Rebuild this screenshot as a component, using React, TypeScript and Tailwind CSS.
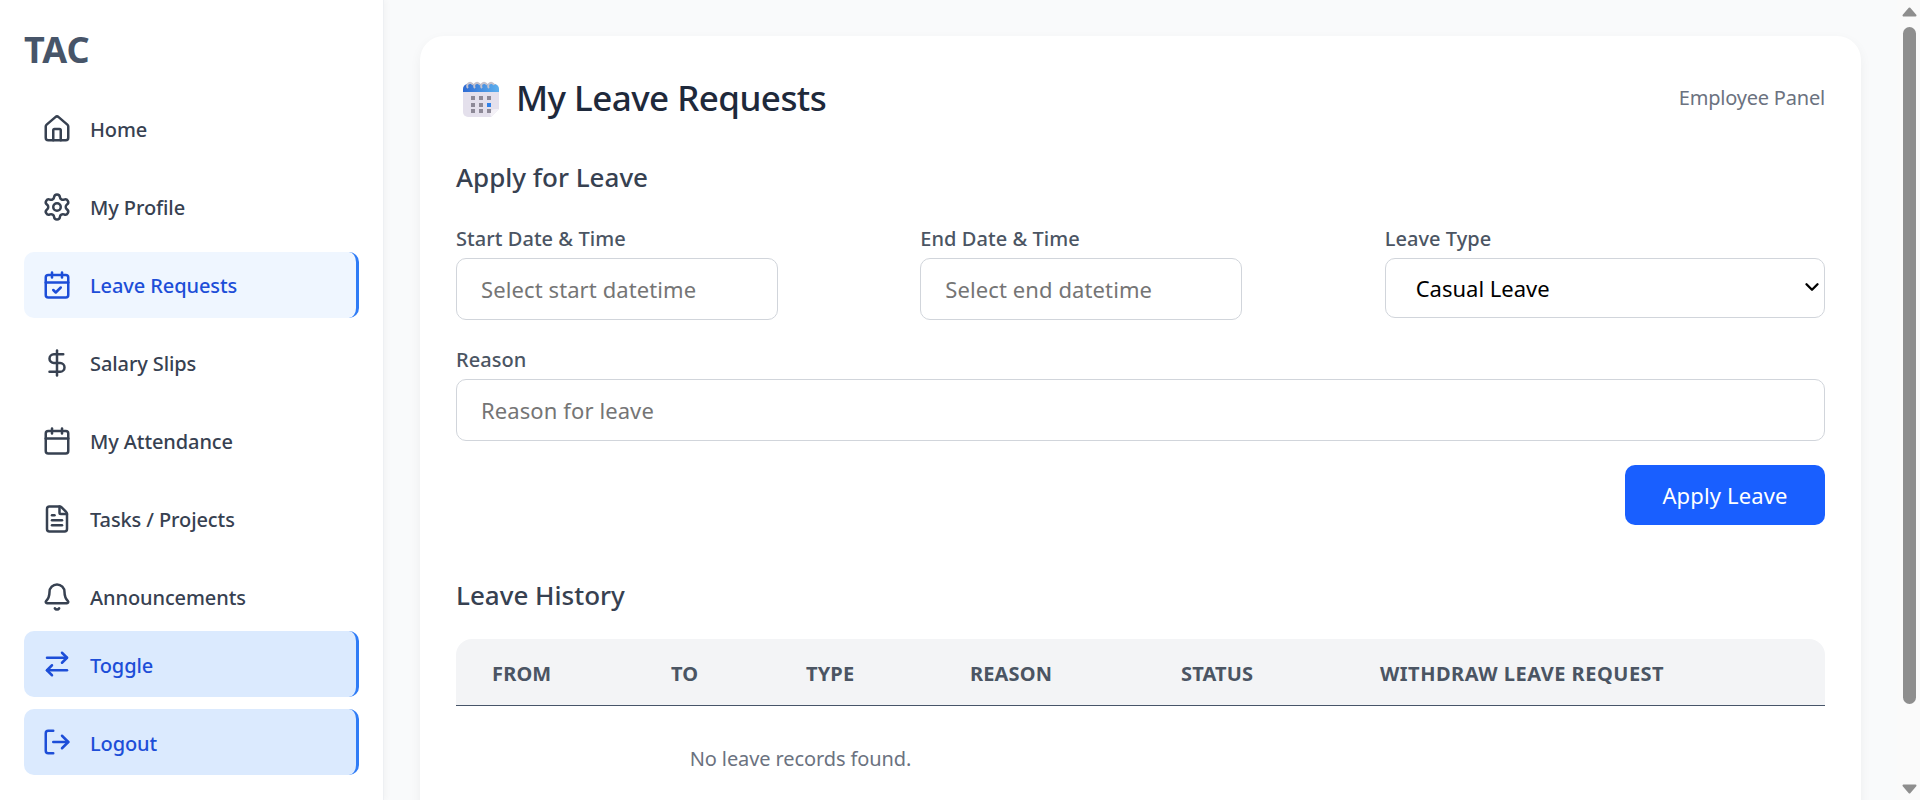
import React from 'react';
import { House, Settings, CalendarCheck, DollarSign, Calendar, FileText, Bell, ArrowRightLeft, LogOut, ChevronDown } from 'lucide-react';

const navItems = [
  { label: 'Home', icon: House },
  { label: 'My Profile', icon: Settings },
  { label: 'Leave Requests', icon: CalendarCheck, active: true },
  { label: 'Salary Slips', icon: DollarSign },
  { label: 'My Attendance', icon: Calendar },
  { label: 'Tasks / Projects', icon: FileText },
  { label: 'Announcements', icon: Bell },
];

function CalendarEmoji() {
  return (
    <svg width="36" height="38" viewBox="0 0 36 38" className="shrink-0">
      <defs>
        <linearGradient id="calTop" x1="0" y1="0" x2="1" y2="0">
          <stop offset="0" stopColor="#2e6bd3" />
          <stop offset="1" stopColor="#5db0ee" />
        </linearGradient>
      </defs>
      <path d="M5 5h26a5 5 0 0 1 5 5v20l-8 8H5a5 5 0 0 1-5-5V10a5 5 0 0 1 5-5z" fill="#e4e0ec" />
      <path d="M0 13v-3a5 5 0 0 1 5-5h26a5 5 0 0 1 5 5v3z" fill="url(#calTop)" />
      <path d="M36 30l-8 8c-1-3-1-5 0-6 1-2 4-2 8-2z" fill="#f4f1f7" />
      {[6, 13, 20, 27].map((x) => (
        <path key={x} d="M0 8a3 3 0 1 1 5 -3" transform={`translate(${x - 1} 1)`} fill="none" stroke="#c4c1cc" strokeWidth="2" />
      ))}
      {[8, 16, 24].map((x) =>
        [17, 24, 30].map((y) => (
          <rect key={`${x}-${y}`} x={x} y={y} width="4" height="4" fill={x === 24 && y === 24 ? '#2f80e8' : '#8d8997'} />
        ))
      )}
    </svg>
  );
}

function Label({ children }: { children: React.ReactNode }) {
  return <label className="block text-[20px] leading-[27px] font-medium text-[#4b5563] tracking-[0.05px] mb-[6px]">{children}</label>;
}

function ArrowHead({ down }: { down?: boolean }) {
  return (
    <svg width="15" height="10" viewBox="0 0 15 10" className="mx-auto">
      <path d={down ? 'M1.5 1.5h12L7.5 8.5z' : 'M1.5 8.5h12L7.5 1.5z'} fill="#8e8e8e" stroke="#8e8e8e" strokeWidth="2" strokeLinejoin="round" />
    </svg>
  );
}

export default function App() {
  return (
    <div className="flex h-[800px] overflow-hidden bg-[#f9fafb] text-[#374151] font-['Noto_Sans','Open_Sans',sans-serif]">
      <aside className="w-[384px] shrink-0 bg-white border-r border-[#eef0f3] shadow-[2px_0_6px_rgba(0,0,0,0.03)] px-6 pt-[24px] flex flex-col">
        <h1 className="text-[36px] leading-[52px] font-bold text-[#475569] mb-[20px]">TAC</h1>
        <nav className="flex flex-col gap-3">
          {navItems.map((item) => (
            <a
              key={item.label}
              className={`h-[66px] flex items-center gap-[18px] pl-[18px] rounded-[10px] text-[20px] font-medium tracking-[-0.1px] ${
                item.active ? 'bg-[#eff6ff] text-[#1d4ed8] border-r-[3px] border-[#2f7cf6]' : 'text-[#374151]'
              }`}
            >
              <item.icon size={30} strokeWidth={2} />
              <span className="pt-[2px]">{item.label}</span>
            </a>
          ))}
        </nav>
        <div className="flex flex-col gap-3 mt-px">
          {[
            { label: 'Toggle', icon: ArrowRightLeft },
            { label: 'Logout', icon: LogOut },
          ].map((item) => (
            <button
              key={item.label}
              className="h-[66px] flex items-center gap-[18px] pl-[18px] rounded-[10px] text-[20px] font-medium tracking-[-0.1px] bg-[#dbeafe] text-[#1d4ed8] border-r-[3px] border-[#2f7cf6]"
            >
              <item.icon size={30} strokeWidth={2} />
              <span className="pt-[3px]">{item.label}</span>
            </button>
          ))}
        </div>
      </aside>

      <main className="flex-1 relative pl-9 pr-[59px] pt-9">
        <section className="bg-white rounded-[24px] shadow-[0_4px_12px_rgba(0,0,0,0.05)] px-9 pt-9 h-[900px]">
          <div className="flex items-center justify-between h-[52px]">
            <div className="flex items-center gap-[17px] pl-[7px]">
              <CalendarEmoji />
              <h2 className="text-[35px] font-medium tracking-[-0.55px] text-[#1e293b]">My Leave Requests</h2>
            </div>
            <span className="text-[20px] tracking-[-0.2px] text-[#6b7280]">Employee Panel</span>
          </div>

          <h3 className="text-[26px] leading-[38px] font-medium text-[#374151] mt-[34px]">Apply for Leave</h3>

          <div className="grid grid-cols-3 gap-6 mt-[29px]">
            <div>
              <Label>Start Date &amp; Time</Label>
              <input
                placeholder="Select start datetime"
                className="w-[322px] h-[62px] px-6 text-[22px] tracking-[0.1px] border border-[#d1d5db] rounded-[10px] bg-white placeholder:text-[#757575] outline-none"
              />
            </div>
            <div>
              <Label>End Date &amp; Time</Label>
              <input
                placeholder="Select end datetime"
                className="w-[322px] h-[62px] px-6 text-[22px] tracking-[0.1px] border border-[#d1d5db] rounded-[10px] bg-white placeholder:text-[#757575] outline-none"
              />
            </div>
            <div>
              <Label>Leave Type</Label>
              <div className="relative">
                <select className="w-full h-[60px] pl-[30px] pr-2 text-[22px] text-black border border-[#d1d5db] rounded-[10px] bg-white outline-none appearance-none">
                  <option>Casual Leave</option>
                </select>
                <ChevronDown size={22} strokeWidth={2.6} className="absolute right-[2px] top-[18px] text-black pointer-events-none" />
              </div>
            </div>
          </div>

          <div className="mt-[26px]">
            <Label>Reason</Label>
            <input
              placeholder="Reason for leave"
              className="w-full h-[62px] px-6 text-[22px] tracking-[0.1px] border border-[#d1d5db] rounded-[10px] placeholder:text-[#757575] outline-none"
            />
          </div>

          <div className="flex justify-end mt-6">
            <button className="w-[200px] h-[60px] rounded-[10px] bg-[#195fff] text-white text-[22px] tracking-[0.15px]">Apply Leave</button>
          </div>

          <h3 className="text-[26px] leading-[38px] font-medium text-[#374151] mt-[51px]">Leave History</h3>

          <table className="w-full table-fixed mt-[25px] border-separate border-spacing-0">
            <thead>
              <tr className="text-[20px] font-bold text-[#4b5563] text-left tracking-[0.15px]">
                <th className="h-[67px] pt-[3px] bg-[#f3f4f6] border-b border-[#475569] pl-9 w-[179px] rounded-tl-[16px]">FROM</th>
                <th className="h-[67px] pt-[3px] bg-[#f3f4f6] border-b border-[#475569] pl-9 w-[135px]">TO</th>
                <th className="h-[67px] pt-[3px] bg-[#f3f4f6] border-b border-[#475569] pl-9 w-[164px]">TYPE</th>
                <th className="h-[67px] pt-[3px] bg-[#f3f4f6] border-b border-[#475569] pl-9 w-[211px]">REASON</th>
                <th className="h-[67px] pt-[3px] bg-[#f3f4f6] border-b border-[#475569] pl-9 w-[200px]">STATUS</th>
                <th className="h-[67px] pt-[3px] bg-[#f3f4f6] border-b border-[#475569] pl-[35px] rounded-tr-[16px] tracking-[0.5px]">WITHDRAW LEAVE REQUEST</th>
              </tr>
            </thead>
            <tbody>
              <tr>
                <td colSpan={4} className="text-center pt-[38px] text-[20px] leading-[30px] tracking-[-0.1px] text-[#6b7280]">No leave records found.</td>
              </tr>
            </tbody>
          </table>
        </section>

        {/* scrollbar of the original window */}
        <div className="absolute top-0 right-0 bottom-0 w-[23px] bg-[#fafafa] pl-[4px] pr-[3px] pt-[7px] pb-[6px] flex flex-col justify-between">
          <div className="flex flex-col gap-[10px]">
            <ArrowHead />
            <div className="mx-auto w-[13px] h-[677px] rounded-full bg-[#8e8e8e]" />
          </div>
          <ArrowHead down />
        </div>
      </main>
    </div>
  );
}
